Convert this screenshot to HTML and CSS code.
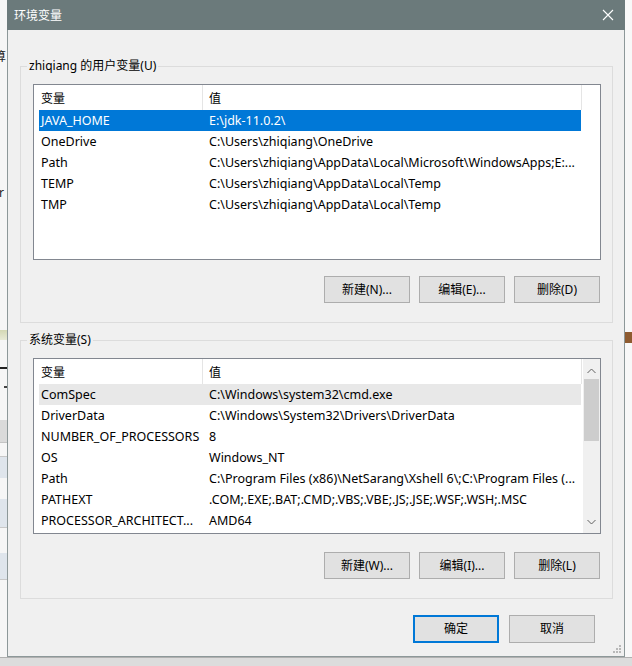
FILE: index.html
```html
<!DOCTYPE html>
<html lang="zh-CN">
<head>
<meta charset="utf-8">
<title>环境变量</title>
<link rel="stylesheet" href="styles.css">
</head>
<body>
<div class="desktop">
  <div class="behind-left">
    <span class="frag frag-a">算</span>
    <span class="frag frag-b">ir</span>
    <div class="band band-green"></div>
    <div class="band band-dash"></div>
    <div class="band band-dot"></div>
    <div class="band band-gray"></div>
    <div class="band band-b1"></div>
    <div class="band band-b2"></div>
    <div class="band band-b3"></div>
  </div>
  <div class="behind-right">
    <div class="band band-brown"></div>
  </div>
  <div class="behind-bottom"></div>

  <div class="dialog">
    <div class="titlebar">
      <span class="title">环境变量</span>
      <svg class="close" width="12" height="12" viewBox="0 0 12 12">
        <path d="M1 1 L11 11 M11 1 L1 11" stroke="#ffffff" stroke-width="1.1" fill="none"/>
      </svg>
    </div>
    <div class="content">
      <fieldset class="group group-user">
        <legend>zhiqiang 的用户变量(U)</legend>
        <div class="list">
          <div class="list-main">
            <div class="thead">
              <div class="hc hc1">变量</div>
              <div class="hc hc2">值</div>
            </div>
            <div class="row selected"><div class="c1">JAVA_HOME</div><div class="c2">E:\jdk-11.0.2\</div></div>
            <div class="row"><div class="c1">OneDrive</div><div class="c2">C:\Users\zhiqiang\OneDrive</div></div>
            <div class="row"><div class="c1">Path</div><div class="c2">C:\Users\zhiqiang\AppData\Local\Microsoft\WindowsApps;E:...</div></div>
            <div class="row"><div class="c1">TEMP</div><div class="c2">C:\Users\zhiqiang\AppData\Local\Temp</div></div>
            <div class="row"><div class="c1">TMP</div><div class="c2">C:\Users\zhiqiang\AppData\Local\Temp</div></div>
          </div>
        </div>
        <div class="btns">
          <button class="btn">新建(N)...</button>
          <button class="btn">编辑(E)...</button>
          <button class="btn">删除(D)</button>
        </div>
      </fieldset>

      <fieldset class="group group-sys">
        <legend>系统变量(S)</legend>
        <div class="list">
          <div class="list-main">
            <div class="thead">
              <div class="hc hc1">变量</div>
              <div class="hc hc2">值</div>
            </div>
            <div class="row hot"><div class="c1">ComSpec</div><div class="c2">C:\Windows\system32\cmd.exe</div></div>
            <div class="row"><div class="c1">DriverData</div><div class="c2">C:\Windows\System32\Drivers\DriverData</div></div>
            <div class="row"><div class="c1">NUMBER_OF_PROCESSORS</div><div class="c2">8</div></div>
            <div class="row"><div class="c1">OS</div><div class="c2">Windows_NT</div></div>
            <div class="row"><div class="c1">Path</div><div class="c2">C:\Program Files (x86)\NetSarang\Xshell 6\;C:\Program Files (...</div></div>
            <div class="row"><div class="c1">PATHEXT</div><div class="c2">.COM;.EXE;.BAT;.CMD;.VBS;.VBE;.JS;.JSE;.WSF;.WSH;.MSC</div></div>
            <div class="row"><div class="c1">PROCESSOR_ARCHITECT...</div><div class="c2">AMD64</div></div>
          </div>
          <div class="scrollbar">
            <div class="arrow">
              <svg width="9" height="6" viewBox="0 0 9 6"><path d="M0.5 5 L4.5 1 L8.5 5" stroke="#606060" stroke-width="1" fill="none"/></svg>
            </div>
            <div class="track">
              <div class="thumb"></div>
            </div>
            <div class="arrow">
              <svg width="9" height="6" viewBox="0 0 9 6"><path d="M0.5 1 L4.5 5 L8.5 1" stroke="#606060" stroke-width="1" fill="none"/></svg>
            </div>
          </div>
        </div>
        <div class="btns">
          <button class="btn">新建(W)...</button>
          <button class="btn">编辑(I)...</button>
          <button class="btn">删除(L)</button>
        </div>
      </fieldset>

      <div class="footer">
        <button class="btn btn-default">确定</button>
        <button class="btn">取消</button>
      </div>
    </div>
    <div class="grip">
      <svg width="8" height="8" viewBox="0 0 8 8">
        <rect x="6" y="0" width="2" height="2" fill="#b8b8b8"/>
        <rect x="3" y="3" width="2" height="2" fill="#b8b8b8"/>
        <rect x="6" y="3" width="2" height="2" fill="#b8b8b8"/>
        <rect x="0" y="6" width="2" height="2" fill="#b8b8b8"/>
        <rect x="3" y="6" width="2" height="2" fill="#b8b8b8"/>
        <rect x="6" y="6" width="2" height="2" fill="#b8b8b8"/>
      </svg>
    </div>
  </div>
</div>
</body>
</html>
```

FILE: styles.css
```css
* { box-sizing: border-box; }
html, body { margin: 0; padding: 0; }
body {
  width: 632px;
  height: 666px;
  overflow: hidden;
  background: #f4f4f4;
  font-family: "Noto Sans", "Noto Sans CJK SC", sans-serif;
  font-size: 12px;
  color: #000;
}
.desktop { position: relative; width: 632px; height: 666px; }

/* window behind the dialog */
.behind-left {
  position: absolute; left: 0; top: 0; width: 8px; height: 666px;
  background: #f6f6f6; overflow: hidden;
}
.frag { position: absolute; font-size: 12px; line-height: 14px; color: #222; }
.frag-a { left: -6px; top: 50px; }
.frag-b { left: -4px; top: 186px; }
.band { position: absolute; left: 0; width: 100%; }
.band-green { top: 330px; height: 10px; background: linear-gradient(#d4d8b4, #e8ead6); }
.band-dash { top: 367px; height: 2px; background: #222; }
.band-dot { top: 386px; height: 2px; left: 4px; width: 3px; background: #444; }
.band-gray { top: 420px; height: 23px; background: #dadada; border-bottom: 1px solid #c4c4c4; }
.band-b1 { top: 456px; height: 22px; background: #dfe5ec; border-top: 1px solid #c8c8c8; }
.band-b2 { top: 499px; height: 29px; background: #dfe5ec; border-bottom: 1px solid #c8c8c8; }
.band-b3 { top: 553px; height: 27px; background: #dfe5ec; border-bottom: 1px solid #c8c8c8; }

.behind-right {
  position: absolute; right: 0; top: 0; width: 8px; height: 666px;
  background: #f8f8f8; overflow: hidden;
}
.band-brown { top: 332px; height: 11px; background: #8e5b30; left: 1px; }
.behind-bottom {
  position: absolute; left: 0; bottom: 0; width: 632px; height: 9px;
  background: #dcdcdc; border-top: 1px solid #b0b0b0;
}

/* dialog */
.dialog {
  position: absolute; left: 7px; top: 0; width: 618px; height: 657px;
  background: #f0f0f0;
  border: 1px solid #8d9899;
  border-top: none;
  display: flex; flex-direction: column;
}
.titlebar {
  height: 30px;
  margin: 0 -1px;
  background: #6b7a7b;
  display: flex; align-items: center; justify-content: space-between;
  padding: 0 11px 0 7px;
}
.title {
  font-family: "Noto Sans CJK SC", sans-serif;
  color: #fff; font-size: 12px; line-height: 16px;
}
.close { display: block; }

.content {
  padding: 28px 11px 0 12px;
  display: flex; flex-direction: column;
}
.group {
  margin: 0;
  min-width: 0;
  border: 1px solid #dcdcdc;
  padding: 10px 11px 19px 12px;
}
.group-sys { margin-top: 9px; }
.group legend {
  font-family: "Noto Sans", "Noto Sans CJK SC", sans-serif;
  font-size: 12px; line-height: 16px;
  padding: 0 2px;
  margin-left: -6px;
}

.list {
  height: 176px;
  background: #fff;
  border: 1px solid #828790;
  display: flex;
  overflow: hidden;
}
.list-main { width: 548px; flex: none; }
.thead { display: flex; height: 25px; align-items: stretch; }
.hc {
  line-height: 25px;
  font-family: "Noto Sans CJK SC", sans-serif;
  padding-left: 7px;
  white-space: nowrap;
}
.hc1 { width: 169px; border-right: 1px solid #e5e5e5; }
.hc2 { width: 379px; padding-left: 6px; border-right: 1px solid #e5e5e5; }

.row {
  display: flex;
  height: 21px; line-height: 22px;
  margin-left: 5px;
  width: 542px;
  white-space: nowrap;
  font-size: 12.5px;
}
.row .c1 { width: 163px; padding-left: 2px; overflow: hidden; flex: none; }
.row .c2 { flex: 1; padding-left: 7px; overflow: hidden; }
.row.selected { background: #0078d7; color: #fff; }
.row.hot { background: #e8e8e8; }

.scrollbar {
  width: 17px; flex: none;
  margin-left: auto;
  background: #f0f0f0;
  display: flex; flex-direction: column;
}
.arrow { height: 20px; display: flex; align-items: center; justify-content: center; }
.arrow:first-child { padding-top: 3px; }
.arrow:last-child { padding-bottom: 2px; }
.track { flex: 1; padding: 0 1px; }
.thumb { height: 62px; background: #cdcdcd; }

.btns {
  display: flex; justify-content: flex-end; gap: 9px;
  margin-top: 16px;
  padding-right: 1px;
}
.group-sys .btns { margin-top: 18px; }
.btn {
  width: 86px; height: 27px;
  background: #e1e1e1;
  border: 1px solid #adadad;
  border-radius: 0;
  font-family: "Noto Sans", "Noto Sans CJK SC", sans-serif;
  font-size: 12px; color: #000;
  padding: 0;
  line-height: 16px;
}
.footer {
  display: flex; justify-content: flex-end; gap: 10px;
  margin-top: 16px;
  padding-right: 18px;
}
.footer .btn { height: 28px; }
.btn-default { border: 2px solid #0078d7; }
.grip { position: absolute; right: 3px; bottom: 3px; line-height: 0; }
```
